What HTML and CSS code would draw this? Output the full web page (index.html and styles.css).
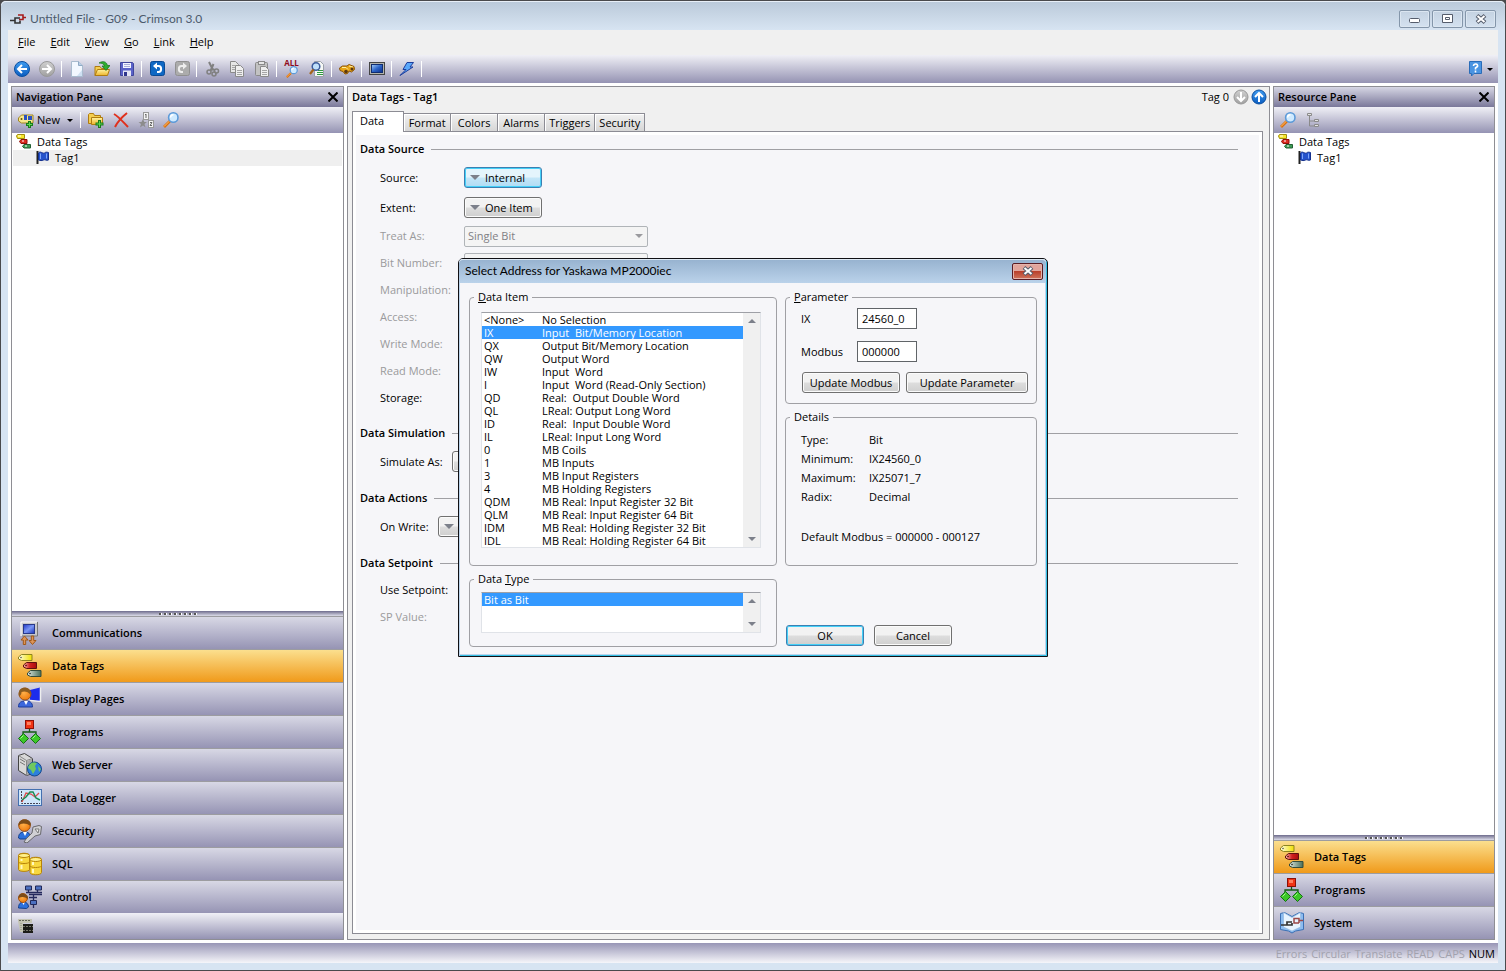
FILE: index.html
```html
<!DOCTYPE html>
<html lang="en">
<head>
  <meta charset="UTF-8" />
  <meta name="viewport" content="width=device-width, initial-scale=1.0"/>
  <title>Untitled File - G09 - Crimson 3.0</title>
  <link rel="stylesheet" href="styles.css">
</head>
<body>
  <!-- shared icons -->
  <svg class="sprite" aria-hidden="true">
    <defs>
      <linearGradient id="g-blue" x1="0" y1="0" x2="0" y2="1"><stop offset="0" stop-color="#3f9cf0"/><stop offset="1" stop-color="#0a5cc0"/></linearGradient>
      <linearGradient id="g-gray" x1="0" y1="0" x2="0" y2="1"><stop offset="0" stop-color="#d0d0d0"/><stop offset="1" stop-color="#a0a0a0"/></linearGradient>
      <linearGradient id="g-gold" x1="0" y1="0" x2="0" y2="1"><stop offset="0" stop-color="#fff3a0"/><stop offset="1" stop-color="#eeb52c"/></linearGradient>
      <linearGradient id="g-yellow" x1="0" y1="0" x2="1" y2="0"><stop offset="0" stop-color="#fffde0"/><stop offset="1" stop-color="#f0e000"/></linearGradient>
      <linearGradient id="g-red" x1="0" y1="0" x2="1" y2="0"><stop offset="0" stop-color="#f8b0a8"/><stop offset=".5" stop-color="#d02020"/><stop offset="1" stop-color="#a80c0c"/></linearGradient>
      <linearGradient id="g-green" x1="0" y1="0" x2="1" y2="0"><stop offset="0" stop-color="#d8e4dc"/><stop offset="1" stop-color="#4a6e58"/></linearGradient>
      <linearGradient id="g-screen" x1="0" y1="0" x2="1" y2="1"><stop offset="0" stop-color="#2038c8"/><stop offset=".5" stop-color="#7a96f4"/><stop offset="1" stop-color="#1830b8"/></linearGradient>
      <linearGradient id="g-panel" x1="0" y1="0" x2="1" y2="1"><stop offset="0" stop-color="#a8d0fa"/><stop offset=".5" stop-color="#2c64c8"/><stop offset="1" stop-color="#0c2c88"/></linearGradient>
      <radialGradient id="g-face" cx=".4" cy=".4" r=".6"><stop offset="0" stop-color="#ffb04a"/><stop offset="1" stop-color="#ef7d10"/></radialGradient>
    </defs>
    <symbol id="i-back" viewBox="0 0 16 16"><circle cx="8" cy="8" r="7.500" fill="url(#g-blue)" stroke="#0b4fa0"/><path d="M13 8H4M8 4L4 8l4 4" fill="none" stroke="#fff" stroke-width="2"/></symbol>
    <symbol id="i-forward" viewBox="0 0 16 16"><circle cx="8" cy="8" r="7.500" fill="url(#g-gray)" stroke="#999"/><path d="M3 8h9M8 4l4 4-4 4" fill="none" stroke="#fff" stroke-width="2"/></symbol>
    <symbol id="i-down" viewBox="0 0 16 16"><circle cx="8" cy="8" r="7" fill="url(#g-gray)" stroke="#999"/><path d="M8 3v9M4 8l4 4 4-4" fill="none" stroke="#fff" stroke-width="2"/></symbol>
    <symbol id="i-up" viewBox="0 0 16 16"><circle cx="8" cy="8" r="7" fill="url(#g-blue)" stroke="#0b4fa0"/><path d="M8 13V4M4 8l4-4 4 4" fill="none" stroke="#fff" stroke-width="2"/></symbol>
    <symbol id="i-new" viewBox="0 0 16 16"><path d="M2.500.5h7l4 4v11h-11z" fill="#f2f8ff" stroke="#a9bccf"/><path d="M9.500.5v4h4" fill="#b9cfe6" stroke="#8fa9c4"/><path d="M8 15l5-6v6z" fill="#cfe0f2"/></symbol>
    <symbol id="i-open" viewBox="0 0 16 16"><path d="M1 14.500V5.500h5l1.500 2H13v2" fill="#f4ce50" stroke="#b07c10"/><path d="M3.500 8.500h12l-2 6H1z" fill="url(#g-gold)" stroke="#b07c10"/><path d="M5 2c4-2.500 7.500-1.500 8.500 2.500H16L12 9.500 8 5h2.500C10 3 8 2 5 2z" fill="#2fae2f" stroke="#14701a" stroke-width=".7"/></symbol>
    <symbol id="i-save" viewBox="0 0 16 16"><path d="M1.500 1.500h12l1 1v12h-13z" fill="#5a62c8" stroke="#40469c"/><path d="M4 2h8v5H4z" fill="#f2f4ff"/><path d="M5 3.500h6M5 5.500h6" stroke="#a8acd8"/><path d="M4 9.500h8V15H4z" fill="#e4e6f4"/><path d="M5 11h3v4H5z" fill="#30368c"/></symbol>
    <symbol id="i-undo" viewBox="0 0 16 16"><rect x="1.500" y=".5" width="14" height="14" rx="2" fill="#0f68c4" stroke="#0a4a94"/><path d="M5 5h4.500c3.500 0 3.500 6 0 6H8" fill="none" stroke="#fff" stroke-width="2"/><path d="M8 1.500v7L4 5z" fill="#fff"/></symbol>
    <symbol id="i-redo" viewBox="0 0 16 16"><rect x="1.500" y=".5" width="14" height="14" rx="2" fill="#acacac" stroke="#909090"/><path d="M12 5H7.500c-3.500 0-3.500 6 0 6H9" fill="none" stroke="#eee" stroke-width="2"/><path d="M9 1.500v7L13 5z" fill="#eee"/></symbol>
    <symbol id="i-cut" viewBox="0 0 16 16"><path d="M5 1l4 8M9.500 3L6.500 10" stroke="#808080" stroke-width="2" fill="none"/><g fill="none" stroke="#808080" stroke-width="1.500"><circle cx="5" cy="11" r="2"/><circle cx="10" cy="13" r="2"/><circle cx="12.500" cy="10" r="2"/></g><path d="M7 8l4 1" stroke="#808080" stroke-width="2"/></symbol>
    <symbol id="i-copy" viewBox="0 0 16 16"><path d="M1.500.5h5l3 3v8h-8z" fill="#e6e6e6" stroke="#8a8a8a"/><path d="M6.500 4.500h5l3 3v8h-8z" fill="#efefef" stroke="#8a8a8a"/><path d="M8 9.500h5M8 11.500h5M8 13.500h5M3 4.500h3M3 6.500h3M3 8.500h3" stroke="#a5a5a5"/></symbol>
    <symbol id="i-paste" viewBox="0 0 16 16"><rect x="1.500" y="1.500" width="12" height="13" rx="1" fill="#c2c2c2" stroke="#8a8a8a"/><rect x="4.500" y=".5" width="6" height="3" fill="#e6e6e6" stroke="#8a8a8a"/><path d="M6.500 5.500h5l3 3v7h-8z" fill="#efefef" stroke="#8a8a8a"/><path d="M8 9.500h5M8 11.500h5M8 13.500h5" stroke="#a5a5a5"/></symbol>
    <symbol id="i-lens" viewBox="0 0 16 16"><path d="M7 9l-6 6" stroke="#dc700c" stroke-width="2.800"/><path d="M6.500 9l-5.500 5.500" stroke="#fcc070" stroke-width="1"/><circle cx="10.300" cy="5.500" r="4.700" fill="#cfeaff" stroke="#5c9ad8" stroke-width="1.600"/><path d="M7.500 5.500a3 3 0 0 1 3-2.700" stroke="#fff" stroke-width="1.500" fill="none"/></symbol>
    <symbol id="i-lens-doc" viewBox="0 0 16 16"><path d="M5.500.5h6l3 3v12h-9z" fill="#f6f8f6" stroke="#9aa0a8"/><path d="M9 9.500h5M8 11.500h6M8 13.500h6" stroke="#2c9a3c"/><circle cx="7" cy="5.500" r="3.800" fill="#c0e0fa" stroke="#3c5c9c" stroke-width="1.500"/><path d="M4.500 8.500L1 13" stroke="#a4641c" stroke-width="2.200"/></symbol>
    <symbol id="i-binoc" viewBox="0 0 16 16"><path d="M.5 7l3-2H8l2-1.500 5 2 .5 3-3 2.500-2.500-1-1.500 2.500-2.500.5-2-2.500-3-1z" fill="#e8a414" stroke="#8c5408"/><path d="M3 6.500h4l2 2M10 5l4 1" stroke="#fff0a0" fill="none"/><circle cx="7" cy="10.500" r="1.800" fill="#5c3810"/><circle cx="13" cy="8" r="1.500" fill="#5c3810"/></symbol>
    <symbol id="i-monitor" viewBox="0 0 16 16"><rect x=".5" y="1.500" width="15" height="12" fill="#b4b4ac" stroke="#444"/><rect x="2.500" y="3.500" width="11" height="8" fill="url(#g-panel)" stroke="#102c70"/></symbol>
    <symbol id="i-bolt" viewBox="0 0 16 16"><path d="M8 1.500h6.500L11 6h3L1 14.500 7 8.500H4z" fill="#5aa8fa" stroke="#1c3c9c"/></symbol>
    <symbol id="i-help" viewBox="0 0 16 16"><path d="M1.500.5h12v12H6L3.500 15v-2.500h-2z" fill="#4a94e2" stroke="#2a6cb8"/><path d="M5.500 5c0-3 5-2.500 4 .5L7.500 7v1.500M7.500 9.500v2" fill="none" stroke="#fff" stroke-width="1.600"/></symbol>
    <symbol id="i-newtag" viewBox="0 0 16 16"><path d="M.5 6l3-3h11.500v8H3.500l-3-2z" fill="#f8e88c" stroke="#a08420"/><circle cx="3.500" cy="7" r="1" fill="#604c10"/><path d="M6 3h3v5H6zM10 4h4v4h-4z" fill="#2c50c0"/><path d="M11.500 9v7M8 12.500h7" stroke="#1a7c1a" stroke-width="3"/><path d="M11.500 10v5M9 12.500h5" stroke="#5cd850"/></symbol>
    <symbol id="i-newfolder" viewBox="0 0 16 16"><path d="M.5 11.500v-9l1-1h4l1 2h6v8z" fill="#f4ce50" stroke="#b07c10"/><path d="M3.500 5.500h11v7h-11z" fill="url(#g-gold)" stroke="#b07c10"/><path d="M11.500 8v8M7.500 12h8" stroke="#1a7c1a" stroke-width="3"/><path d="M11.500 9v6M8.500 12h6" stroke="#5cd850"/></symbol>
    <symbol id="i-delete" viewBox="0 0 16 16"><path d="M1 2c5 3 9 8 14 13M14 1C9 5 5 9 2 15" fill="none" stroke="#e0301c" stroke-width="2"/></symbol>
    <symbol id="i-sort" viewBox="0 0 16 16"><rect x="5.500" y=".5" width="5" height="7" fill="#f4f4f4" stroke="#999"/><path d="M7 3l1-1v4" fill="none" stroke="#666"/><path d="M5 7l1.300 3H9l-2.500 2 1 3.500L5 13.500l-3 2 1-3.500-2.500-2h3z" fill="#8c8c8c"/><rect x="10.500" y="8.500" width="5" height="7" fill="#f4f4f4" stroke="#999"/><path d="M12 10.500h2l-2 3h2" fill="none" stroke="#666"/></symbol>
    <symbol id="i-tree" viewBox="0 0 16 16"><path d="M4.500 4v10H10M4.500 9H10" fill="none" stroke="#8a8a8a"/><path d="M2.500 1.500h4v2h-4zM9.500 7.500h4v2h-4zM9.500 12.500h4v2h-4z" fill="#e4e4e4" stroke="#8a8a8a"/></symbol>
    <symbol id="i-tags" viewBox="0 0 24 24"><path d="M.5 3l3-2.500h10.500v6H3.500L.5 5z" fill="url(#g-yellow)" stroke="#8c8420"/><circle cx="3" cy="3.500" r=".8" fill="#555"/><path d="M5.500 11l3-2.500h10v6h-10l-3-1.500z" fill="url(#g-red)" stroke="#601010"/><circle cx="8" cy="11.500" r=".8" fill="#400"/><path d="M9.500 19l3-2.500h10.500v6H12.500l-3-1.500z" fill="url(#g-green)" stroke="#344c3c"/><circle cx="12" cy="19.500" r=".8" fill="#222"/></symbol>
    <symbol id="i-tags-sm" viewBox="0 0 16 16"><path d="M.5 2l1-1.500h7v4h-7z" fill="#f8e82c" stroke="#a08c10"/><path d="M3.500 7.500l1.500-2h6v4H5z" fill="#dc2c20" stroke="#901008"/><path d="M6.500 12.500l1.500-2h6.500v3.500H8z" fill="#3c9c54" stroke="#246034"/><path d="M2 2h3M6 7h2M9 12h2" stroke="#fff"/></symbol>
    <symbol id="i-flag" viewBox="0 0 16 16"><path d="M2.500 1v13" stroke="#222" stroke-width="2"/><path d="M3.500 3c2-2.500 4 1 6 0 1-1 2-1 4-.500v7.500c-3 1-3-1-5 0s-3 .5-5 0z" fill="#2452cc" stroke="#14308c"/><path d="M5.500 3.500v5.500M11.500 3.500v5" stroke="#7ca4f8"/></symbol>
    <symbol id="i-comm" viewBox="0 0 24 24"><path d="M3 1h17v14H3z" fill="#c8c8cc"/><path d="M3 15V1h16" fill="none" stroke="#fff"/><path d="M19.500 1v14H4" fill="none" stroke="#777"/><rect x="5.500" y="3.500" width="11" height="9" fill="url(#g-screen)" stroke="#283888"/><path d="M6.500 15l3.500 4H7.700v4.500H5.300V19H3zM14.500 23.500l-3.500-4h2.300V15h2.400v4.500H18z" fill="#dc9458" stroke="#a05818"/></symbol>
    <symbol id="i-display" viewBox="0 0 24 24"><path d="M12 3L22 .5v14L12 13z" fill="#1c2cec"/><path d="M22.500.5v14L12 13.500" fill="none" stroke="#eee" stroke-width="1.500"/><path d="M.5 20c0-5 3-6 7-6s7 1 7 6z" fill="#3c68dc" stroke="#1c3c9c"/><path d="M6 14l2 4 2-4z" fill="#fff"/><circle cx="7" cy="7" r="6" fill="url(#g-face)" stroke="#a05010"/><path d="M1 9C-.5 1 5.500 0 8.500 1s5 3 4 7c-2-4-7-4-9-3 0 2-1 4-2.500 4z" fill="#8c5c20"/></symbol>
    <symbol id="i-programs" viewBox="0 0 24 24"><path d="M11.500 8v4M5 16v-4h13v4" fill="none" stroke="#145c14" stroke-width="1.300"/><rect x="7.500" y=".5" width="8" height="8" fill="#f03414" stroke="#8c1008"/><path d="M9 2h4v3H9z" fill="#ff8060"/><path d="M5.500 13.500l5 5-5 5-5-5zM17.500 13.500l5 5-5 5-5-5z" fill="#3cc828" stroke="#147014"/><path d="M2.500 18.500l3-3M14.500 18.500l3-3" stroke="#a4f490"/></symbol>
    <symbol id="i-web" viewBox="0 0 24 24"><path d="M.5 2.500l6-2 8 5v15l-6 2-8-5z" fill="#d8d8d8" stroke="#444"/><path d="M.5 2.500l8 5v15M8.500 7.500l6-2" stroke="#888" fill="none"/><path d="M9 8l5-2v14l-5 2z" fill="#a8a8a8"/><path d="M2 6l5 3M2 9l5 3" stroke="#777"/><circle cx="16.500" cy="16" r="7" fill="#2c80dc" stroke="#14488c"/><path d="M11 12c2-3 6-3 8-2l-2 3 1 3-3 5-2-4-3-2zM20 13l3 3-2 3z" fill="#70c860"/></symbol>
    <symbol id="i-logger" viewBox="0 0 24 24"><rect x=".5" y="3.500" width="23" height="16" fill="#cfe6fa" stroke="#4470b0"/><path d="M3.500 5v12.500H22" fill="none" stroke="#445" stroke-dasharray="2 1"/><path d="M4 16l4-9 5 1 4 3 4-4" fill="none" stroke="#e04c4c" stroke-width="1.300"/><path d="M4 14l4-3 4-5h3l3 6 4 2" fill="none" stroke="#1c8c54" stroke-width="1.500"/></symbol>
    <symbol id="i-security" viewBox="0 0 24 24"><path d="M.5 19c0-4 2-6 6-6s6 2 6 5l-3 2H2z" fill="#2c70dc" stroke="#14408c"/><path d="M5 13l2 4 2-4z" fill="#fff"/><circle cx="6.500" cy="6.500" r="5.800" fill="url(#g-face)" stroke="#a05010"/><path d="M.5 7C0 1 5 0 8 .5s6 3 4.500 6.500c-3-3-8-3-10-2z" fill="#7c4c18"/><path d="M15 8l6-1.500 2.500 1-1 8-5.500 1.500-8 7-3-1 2-3 6-6z" fill="#d0d0d4" stroke="#68686c"/><path d="M17 10h4l-1 4z" fill="#f4f4f4" stroke="#777"/></symbol>
    <symbol id="i-sql" viewBox="0 0 24 24"><g fill="#f8d840" stroke="#b88408"><path d="M.5 3.500c0-3 11-3 11 0v14c0 2.500-11 2.500-11 0z"/><path d="M.5 10c1 2 10 2 11 0" fill="none"/><ellipse cx="6" cy="3.500" rx="5.500" ry="2" fill="#fff088"/><path d="M12 7.500c0-3 11.500-3 11.500 0v13c0 3-11.500 3-11.500 0z"/><path d="M12 14c1 2 10 2 11.500 0" fill="none"/><ellipse cx="17.700" cy="7.500" rx="5.700" ry="2" fill="#fff088"/></g><path d="M3.500 7v2M3.500 13v4M15 10v3M15 17v4" stroke="#fff8c0" stroke-width="2"/></symbol>
    <symbol id="i-control" viewBox="0 0 24 24"><path d="M10.500 5v2.500M19.500 5v2.500M8 7.500h16M11 9.500h13M15.500 10v5M11 12.500h8M15.500 19v4" stroke="#24285c" stroke-width="1.300"/><path d="M7.500 1h6v4h-6zM17.500 1h6v4h-6zM12.500 15.500h6v4h-6z" fill="#4c70c0" stroke="#202858"/><path d="M.5 23c0-4 2-6 5-6s5 2 5 5l-2 1.500z" fill="#2c70dc" stroke="#14408c"/><path d="M4 17l1.500 3L7 17z" fill="#fff"/><circle cx="5" cy="13" r="4.500" fill="url(#g-face)" stroke="#a05010"/><path d="M.5 13c0-5 4-5 6-4s4 2 3 5c-2-2-5-3-9-1z" fill="#7c4c18"/></symbol>
    <symbol id="i-system" viewBox="0 0 24 24"><path d="M.5 2.500l4-1 7.500 4 7.500-4 4 1v16l-8 1.500-3.500 2-3.500-2-8-1.500z" fill="#8cbcf0" stroke="#3c70b4"/><path d="M3.500 1.500l8.500 5 8.500-5V16l-8.500 4-8.500-4z" fill="#e8f4ff" stroke="#90b4dc" stroke-width=".6"/><path d="M1 14h6v-3h5M7 14h5v-2" fill="none" stroke="#333" stroke-width="1.700"/><path d="M23 9.500h-4M19 12h-5V7.500h5v4.500" fill="none" stroke="#9c4848" stroke-width="1.500"/></symbol>
    <symbol id="i-calc" viewBox="0 0 16 16"><path d="M0 1h14v4H5v9H2L0 3z" fill="#c4c4b4"/><path d="M1 2.500h12" stroke="#666858" stroke-dasharray="2 1"/><path d="M3 5v8" stroke="#8c8e7c" stroke-dasharray="1 1"/><rect x="5" y="6" width="10" height="9" fill="#1c1c18"/><path d="M5 8.500h10M5 12.500h10" stroke="#77776a" stroke-dasharray="2 1"/></symbol>
    <symbol id="i-app" viewBox="0 0 16 16"><path d="M0 9.500h5M10 7H5v5h5V9.500" fill="none" stroke="#333" stroke-width="1.600"/><path d="M16 6.500h-3M8 4h5v4.500H9" fill="none" stroke="#a81c1c" stroke-width="1.600"/></symbol>
    <symbol id="i-x" viewBox="0 0 10 10"><path d="M.5.5l9 9M9.500.5l-9 9" stroke="#000" stroke-width="2"/></symbol>
    <symbol id="i-winx" viewBox="0 0 12 10"><path d="M2 1.500l8 7M10 1.500l-8 7" stroke="#555d6c" stroke-width="4"/><path d="M2.500 2l7 6M9.500 2l-7 6" stroke="#fff" stroke-width="2"/></symbol>
  </svg>

  <div class="window">
    <header class="title-bar">
      <svg class="icon16"><use href="#i-app"/></svg>
      <h1>Untitled File - G09 - Crimson 3.0</h1>
      <div class="win-buttons">
        <button type="button" aria-label="Minimize"><svg width="12" height="10"><rect x=".5" y="4.500" width="10" height="4" rx="1" fill="#fff" stroke="#555d6c"/></svg></button>
        <button type="button" aria-label="Restore"><svg width="12" height="10"><path d="M.5.5h10v8H.5zM3.500 3.500h4v2h-4z" fill="#fff" stroke="#555d6c"/></svg></button>
        <button type="button" aria-label="Close"><svg width="12" height="10"><use href="#i-winx"/></svg></button>
      </div>
    </header>

    <div class="client">
      <nav class="menu-bar">
        <a href="#"><u>F</u>ile</a>
        <a href="#"><u>E</u>dit</a>
        <a href="#"><u>V</u>iew</a>
        <a href="#"><u>G</u>o</a>
        <a href="#"><u>L</u>ink</a>
        <a href="#"><u>H</u>elp</a>
      </nav>

      <div class="toolbar">
        <button type="button" aria-label="Back"><svg class="icon16"><use href="#i-back"/></svg></button>
        <button type="button" aria-label="Forward"><svg class="icon16"><use href="#i-forward"/></svg></button>
        <span class="sep"></span>
        <button type="button" aria-label="New"><svg class="icon16"><use href="#i-new"/></svg></button>
        <button type="button" aria-label="Open"><svg class="icon16"><use href="#i-open"/></svg></button>
        <button type="button" aria-label="Save"><svg class="icon16"><use href="#i-save"/></svg></button>
        <span class="sep"></span>
        <button type="button" aria-label="Undo"><svg class="icon16"><use href="#i-undo"/></svg></button>
        <button type="button" aria-label="Redo"><svg class="icon16"><use href="#i-redo"/></svg></button>
        <span class="sep"></span>
        <button type="button" aria-label="Cut"><svg class="icon16"><use href="#i-cut"/></svg></button>
        <button type="button" aria-label="Copy"><svg class="icon16"><use href="#i-copy"/></svg></button>
        <button type="button" aria-label="Paste"><svg class="icon16"><use href="#i-paste"/></svg></button>
        <span class="sep"></span>
        <button type="button" class="find-all" aria-label="Find all"><span>ALL</span><svg width="12" height="12"><use href="#i-lens"/></svg></button>
        <button type="button" aria-label="Find in file"><svg class="icon16"><use href="#i-lens-doc"/></svg></button>
        <span class="sep"></span>
        <button type="button" aria-label="Browse"><svg class="icon16"><use href="#i-binoc"/></svg></button>
        <span class="sep"></span>
        <button type="button" aria-label="Emulator"><svg class="icon16"><use href="#i-monitor"/></svg></button>
        <span class="sep"></span>
        <button type="button" aria-label="Download"><svg class="icon16"><use href="#i-bolt"/></svg></button>
        <span class="sep"></span>
        <button type="button" class="help-btn" aria-label="Help"><svg class="icon16"><use href="#i-help"/></svg><i class="caret"></i></button>
      </div>

      <main class="workspace">
        <aside class="pane">
          <div class="pane-header"><h2>Navigation Pane</h2><button type="button" aria-label="Close pane"><svg width="10" height="10"><use href="#i-x"/></svg></button></div>
          <div class="toolbar pane-toolbar">
            <button type="button" class="new-btn"><svg class="icon16"><use href="#i-newtag"/></svg>New<i class="caret"></i></button>
            <span class="sep"></span>
            <button type="button" aria-label="New folder"><svg class="icon16"><use href="#i-newfolder"/></svg></button>
            <button type="button" aria-label="Delete"><svg class="icon16"><use href="#i-delete"/></svg></button>
            <button type="button" aria-label="Sort"><svg class="icon16"><use href="#i-sort"/></svg></button>
            <button type="button" aria-label="Find"><svg class="icon16"><use href="#i-lens"/></svg></button>
          </div>
          <ul class="tree">
            <li><svg class="icon16"><use href="#i-tags-sm"/></svg>Data Tags</li>
            <li class="child selected"><svg class="icon16"><use href="#i-flag"/></svg>Tag1</li>
          </ul>
          <div class="splitter"></div>
          <nav class="categories">
            <a href="#"><svg class="icon24"><use href="#i-comm"/></svg>Communications</a>
            <a href="#" class="active"><svg class="icon24"><use href="#i-tags"/></svg>Data Tags</a>
            <a href="#"><svg class="icon24"><use href="#i-display"/></svg>Display Pages</a>
            <a href="#"><svg class="icon24"><use href="#i-programs"/></svg>Programs</a>
            <a href="#"><svg class="icon24"><use href="#i-web"/></svg>Web Server</a>
            <a href="#"><svg class="icon24"><use href="#i-logger"/></svg>Data Logger</a>
            <a href="#"><svg class="icon24"><use href="#i-security"/></svg>Security</a>
            <a href="#"><svg class="icon24"><use href="#i-sql"/></svg>SQL</a>
            <a href="#"><svg class="icon24"><use href="#i-control"/></svg>Control</a>
          </nav>
          <div class="toolbar pane-toolbar pane-footer">
            <button type="button" aria-label="Devices"><svg class="icon16"><use href="#i-calc"/></svg></button>
          </div>
        </aside>

        <section class="editor">
          <div class="editor-header">
            <h2>Data Tags - Tag1</h2>
            <span class="tag-index">Tag 0</span>
            <button type="button" aria-label="Next tag"><svg class="icon16"><use href="#i-down"/></svg></button>
            <button type="button" aria-label="Previous tag"><svg class="icon16"><use href="#i-up"/></svg></button>
          </div>
          <div class="tabs" role="tablist">
            <button type="button" role="tab" class="active">Data</button>
            <button type="button" role="tab">Format</button>
            <button type="button" role="tab">Colors</button>
            <button type="button" role="tab">Alarms</button>
            <button type="button" role="tab">Triggers</button>
            <button type="button" role="tab">Security</button>
          </div>
          <form class="sheet">
            <h3>Data Source</h3>
            <div class="row tall"><label for="source">Source:</label><button type="button" id="source" class="btn drop default"><i class="arrow"></i>Internal</button></div>
            <div class="row tall"><label for="extent">Extent:</label><button type="button" id="extent" class="btn drop"><i class="arrow"></i>One Item</button></div>
            <div class="row off"><label for="treat">Treat As:</label><span class="combo"><select id="treat" disabled><option>Single Bit</option></select><i class="arrow"></i></span></div>
            <div class="row off"><label for="bit">Bit Number:</label><span class="combo"><select id="bit" disabled></select></span></div>
            <div class="row off"><span>Manipulation:</span></div>
            <div class="row off"><span>Access:</span></div>
            <div class="row off"><span>Write Mode:</span></div>
            <div class="row off"><span>Read Mode:</span></div>
            <div class="row"><span>Storage:</span></div>
            <h3>Data Simulation</h3>
            <div class="row tall fit"><label for="simulate">Simulate As:</label><button type="button" id="simulate" class="btn drop"><i class="arrow"></i></button></div>
            <h3>Data Actions</h3>
            <div class="row tall fit"><label for="write">On Write:</label><button type="button" id="write" class="btn drop"><i class="arrow"></i></button></div>
            <h3>Data Setpoint</h3>
            <div class="row"><span>Use Setpoint:</span></div>
            <div class="row off"><span>SP Value:</span></div>
          </form>
        </section>

        <aside class="pane pane-right">
          <div class="pane-header"><h2>Resource Pane</h2><button type="button" aria-label="Close pane"><svg width="10" height="10"><use href="#i-x"/></svg></button></div>
          <div class="toolbar pane-toolbar">
            <button type="button" aria-label="Find"><svg class="icon16"><use href="#i-lens"/></svg></button>
            <button type="button" aria-label="Tree"><svg class="icon16"><use href="#i-tree"/></svg></button>
          </div>
          <ul class="tree">
            <li><svg class="icon16"><use href="#i-tags-sm"/></svg>Data Tags</li>
            <li class="child"><svg class="icon16"><use href="#i-flag"/></svg>Tag1</li>
          </ul>
          <div class="splitter"></div>
          <nav class="categories">
            <a href="#" class="active"><svg class="icon24"><use href="#i-tags"/></svg>Data Tags</a>
            <a href="#"><svg class="icon24"><use href="#i-programs"/></svg>Programs</a>
            <a href="#"><svg class="icon24"><use href="#i-system"/></svg>System</a>
          </nav>
        </aside>
      </main>

      <footer class="status-bar">
        <span>Errors</span><span>Circular</span><span>Translate</span><span>READ</span><span>CAPS</span><span class="on">NUM</span>
      </footer>
    </div>
  </div>

  <div class="overlay">
    <div class="dialog" role="dialog" aria-labelledby="dialog-title">
      <div class="dialog-title">
        <h2 id="dialog-title">Select Address for Yaskawa MP2000iec</h2>
        <button type="button" aria-label="Close"><svg width="12" height="10"><use href="#i-winx"/></svg></button>
      </div>
      <div class="dialog-body">
        <fieldset class="list-group">
          <legend><u>D</u>ata Item</legend>
          <div class="list-box">
            <ul role="listbox" aria-label="Data Item" tabindex="0">
              <li role="option"><b>&lt;None&gt;</b>No Selection</li>
              <li role="option" aria-selected="true" class="selected"><b>IX</b>Input  Bit/Memory Location</li>
              <li role="option"><b>QX</b>Output Bit/Memory Location</li>
              <li role="option"><b>QW</b>Output Word</li>
              <li role="option"><b>IW</b>Input  Word</li>
              <li role="option"><b>I</b>Input  Word (Read-Only Section)</li>
              <li role="option"><b>QD</b>Real:  Output Double Word</li>
              <li role="option"><b>QL</b>LReal: Output Long Word</li>
              <li role="option"><b>ID</b>Real:  Input Double Word</li>
              <li role="option"><b>IL</b>LReal: Input Long Word</li>
              <li role="option"><b>0</b>MB Coils</li>
              <li role="option"><b>1</b>MB Inputs</li>
              <li role="option"><b>3</b>MB Input Registers</li>
              <li role="option"><b>4</b>MB Holding Registers</li>
              <li role="option"><b>QDM</b>MB Real: Input Register 32 Bit</li>
              <li role="option"><b>QLM</b>MB Real: Input Register 64 Bit</li>
              <li role="option"><b>IDM</b>MB Real: Holding Register 32 Bit</li>
              <li role="option"><b>IDL</b>MB Real: Holding Register 64 Bit</li>
            </ul>
            <div class="scrollbar"><i class="arrow up"></i><i class="arrow"></i></div>
          </div>
        </fieldset>

        <div class="side">
          <fieldset class="parameter">
            <legend><u>P</u>arameter</legend>
            <div class="fields">
              <label for="ix">IX</label><input type="text" id="ix" value="24560_0">
              <label for="modbus">Modbus</label><input type="text" id="modbus" value="000000">
            </div>
            <div class="actions">
              <button type="button" class="btn">Update Modbus</button>
              <button type="button" class="btn">Update Parameter</button>
            </div>
          </fieldset>
          <fieldset class="details">
            <legend>Details</legend>
            <dl>
              <dt>Type:</dt><dd>Bit</dd>
              <dt>Minimum:</dt><dd>IX24560_0</dd>
              <dt>Maximum:</dt><dd>IX25071_7</dd>
              <dt>Radix:</dt><dd>Decimal</dd>
            </dl>
            <p>Default Modbus = 000000 - 000127</p>
          </fieldset>
        </div>

        <fieldset class="list-group type-group">
          <legend>Data <u>T</u>ype</legend>
          <div class="list-box">
            <ul role="listbox" aria-label="Data Type" tabindex="0">
              <li role="option" aria-selected="true" class="selected">Bit as Bit</li>
            </ul>
            <div class="scrollbar"><i class="arrow up"></i><i class="arrow"></i></div>
          </div>
        </fieldset>

        <div class="dialog-buttons">
          <button type="button" class="btn default">OK</button>
          <button type="button" class="btn">Cancel</button>
        </div>
      </div>
    </div>
  </div>
</body>
</html>
```
FILE: styles.css
```css
* {
  box-sizing: border-box;
}

body {
  margin: 0;
  background: #4a4a4c;
  font-family: "Open Sans", "Noto Sans", sans-serif;
  font-size: 11px;
  line-height: 16px;
  color: #000;
}

h1, h2, h3, p, ul, dl, dd {
  margin: 0;
  padding: 0;
}

h1, h2, h3 {
  font-size: 11px;
  font-weight: 600;
}

button, input, select {
  font: inherit;
  color: inherit;
}

button {
  margin: 0;
  padding: 0;
  border: 0;
  background: none;
}

a {
  color: inherit;
  text-decoration: none;
}

svg {
  display: block;
  flex: none;
}

.sprite {
  position: absolute;
  width: 0;
  height: 0;
}

.icon16 {
  width: 16px;
  height: 16px;
}

.icon24 {
  width: 24px;
  height: 24px;
}

/* main window */
.window {
  min-height: 100vh;
  display: flex;
  flex-direction: column;
  padding: 0 7px 7px;
  border: 1px solid #4a4a4c;
  border-radius: 6px 6px 0 0;
  background: #d7e4f2;
}

.title-bar {
  height: 29px;
  margin: 0 -7px;
  padding: 6px 9px 0;
  display: flex;
  align-items: center;
  gap: 4px;
  border-radius: 5px 5px 0 0;
  background: linear-gradient(#bac9d9, #d7e4f2);
  box-shadow: inset 0 1px #e8eff7;
}

.title-bar h1,
.dialog-title h2 {
  font-family: Lato, "Open Sans", sans-serif;
  font-size: 12px;
  font-weight: 400;
}

.title-bar h1 {
  color: #4c5a6c;
}

.win-buttons {
  display: flex;
  gap: 2px;
  margin-left: auto;
}

.win-buttons button {
  width: 31px;
  height: 18px;
  display: grid;
  place-items: center;
  border: 1px solid #8496aa;
  border-radius: 2px;
  box-shadow: inset 0 0 0 1px #dbe6f1;
}

.client {
  flex: 1;
  display: flex;
  flex-direction: column;
  background: #fff;
}

.menu-bar {
  height: 25px;
  display: flex;
  align-items: center;
  gap: 15px;
  padding: 0 0 2px 10px;
  background: #f0f0f0;
}

.toolbar {
  height: 28px;
  display: flex;
  align-items: center;
  padding-left: 1px;
  background: linear-gradient(#f0f0f6, #9593b3);
}

.toolbar button {
  width: 25px;
  height: 22px;
  display: flex;
  align-items: center;
  justify-content: center;
}

.sep {
  width: 5px;
  height: 16px;
  border-left: 2px solid transparent;
  border-right: 2px solid transparent;
  background: #fff;
  background-clip: padding-box;
}

.toolbar .find-all {
  flex-direction: column;
  font-size: 8px;
  line-height: 6px;
  font-weight: 700;
  color: #900c1c;
}

.toolbar .help-btn {
  width: 31px;
  gap: 3px;
  margin-left: auto;
  margin-right: 2px;
}

.caret {
  border: 3px solid transparent;
  border-top-color: #000;
  border-bottom: 0;
}

/* panes */
.workspace {
  flex: 1;
  display: flex;
  gap: 3px;
  padding: 3px;
}

.pane {
  flex: none;
  width: 333px;
  display: flex;
  flex-direction: column;
  border: 1px solid #8e8e94;
  background: #fff;
}

.pane-right {
  width: 222px;
}

.pane-header {
  height: 20px;
  display: flex;
  align-items: center;
  justify-content: space-between;
  padding: 0 5px 0 4px;
  background: linear-gradient(#d6d6e4, #7a789a);
}

.pane-toolbar {
  height: 26px;
}

.toolbar .new-btn {
  width: 65px;
  gap: 3px;
}

.new-btn .caret {
  margin-left: 4px;
}

.tree {
  flex: 1;
  padding: 1px;
  list-style: none;
}

.tree li {
  height: 16px;
  display: flex;
  align-items: center;
  gap: 5px;
  padding-left: 3px;
}

.tree .child {
  padding-left: 22px;
  gap: 4px;
}

.tree .selected {
  background: #efefef;
}

.splitter {
  height: 5px;
  display: flex;
  justify-content: center;
  align-items: center;
  background: linear-gradient(#6d6b8c, #dcdce8);
}

.splitter::before {
  content: "";
  width: 38px;
  height: 2px;
  background: repeating-linear-gradient(90deg, #555 0 2px, #fff 2px 3px, transparent 3px 5px);
}

.categories a {
  height: 33px;
  display: flex;
  align-items: center;
  gap: 10px;
  padding-left: 6px;
  border-top: 1px solid #9c9ca0;
  background: linear-gradient(#d8d8e5, #9694b4);
  font-weight: 600;
}

.categories .active {
  background: linear-gradient(#fbdf8e, #f09a1a);
}

/* editor */
.editor {
  flex: 1;
  display: flex;
  flex-direction: column;
  padding: 0 6px 5px 4px;
  border: 1px solid #8e8e94;
  background: #f0f0f0;
}

.editor-header {
  height: 24px;
  display: flex;
  align-items: center;
  gap: 2px;
  padding-bottom: 4px;
  margin-right: -4px;
}

.tag-index {
  margin-left: auto;
  margin-right: 2px;
}

.tabs {
  display: flex;
  align-items: flex-end;
  margin-bottom: -1px;
}

.tabs button {
  height: 19px;
  min-width: 47px;
  padding: 0 4px;
  border: 1px solid #8c8c94;
  border-left: 0;
  background: linear-gradient(#f2f2f2, #d6d6d6);
  box-shadow: inset 1px 1px #fff;
}

.tabs .active {
  z-index: 1;
  height: 21px;
  padding: 0 19px 2px 7px;
  border-left: 1px solid #8c8c94;
  border-bottom: 0;
  background: #fff;
}

.sheet {
  flex: 1;
  padding: 4px 24px 0 4px;
  border: 1px solid #8c8c94;
  background: #f6f6f9;
  box-shadow: inset 0 0 0 3px #fff;
}

.sheet h3 {
  height: 20px;
  display: flex;
  align-items: center;
  gap: 7px;
  margin: 11px 0 4px 3px;
}

.sheet h3:first-child {
  margin-top: 3px;
}

.sheet h3::after {
  content: "";
  flex: 1;
  height: 1px;
  background: #a0a0a4;
}

.row {
  height: 27px;
  display: grid;
  grid-template-columns: 84px 184px;
  align-items: center;
  padding-left: 23px;
  padding-bottom: 1px;
}

.row.tall {
  height: 30px;
}

.row.fit {
  grid-template-columns: auto auto;
  justify-content: start;
  gap: 9px;
}

.off {
  color: #9a9a9c;
}

.btn {
  height: 21px;
  width: 78px;
  display: flex;
  align-items: center;
  justify-content: center;
  border: 1px solid #707070;
  border-radius: 3px;
  background: linear-gradient(#f2f2f2 0 48%, #dddddd 52%, #cfcfcf);
  box-shadow: inset 0 0 0 1px #fbfbfb;
}

.btn.drop {
  justify-content: flex-start;
  gap: 5px;
  padding-left: 5px;
}

.btn.default {
  border-color: #3c7fb1;
  box-shadow: inset 0 0 0 1px #44d0f8;
}

.drop.default {
  background: linear-gradient(#e4f4fc 0 48%, #c4e6f8 52%, #b0dcf4);
}

.arrow {
  border: 5px solid transparent;
  border-top-color: #7c808a;
  border-bottom: 0;
}

.combo {
  display: flex;
  align-items: center;
  height: 21px;
  border: 1px solid #b0b4b8;
  border-radius: 2px;
  background: #f4f4f4;
}

.combo select {
  flex: 1;
  height: 19px;
  padding: 0 3px;
  border: 0;
  background: none;
  appearance: none;
  color: #808084;
  opacity: 1;
}

.combo .arrow {
  margin-right: 4px;
  border-width: 4px 4px 0;
  border-top-color: #9a9a9e;
}

.status-bar {
  height: 20px;
  display: flex;
  align-items: center;
  justify-content: flex-end;
  gap: 4px;
  padding: 2px 3px 0;
  background: linear-gradient(#9896b6, #f6f6fa);
  color: #a2a2ae;
}

.status-bar .on {
  color: #000;
}

/* address dialog */
.overlay {
  position: absolute;
  inset: 0;
  display: flex;
  justify-content: center;
  align-items: flex-start;
  padding-top: 258px;
}

.dialog {
  width: 590px;
  border: 1px solid #101014;
  border-radius: 5px 5px 0 0;
  background: #f6f6f9;
  box-shadow: inset 1px 0 #bcd4ec, inset -1px -1px #34c0e4, inset -2px -2px #bcd4ec;
}

.dialog-title {
  height: 24px;
  display: flex;
  align-items: center;
  justify-content: space-between;
  padding: 0 3px 0 6px;
  margin-right: 1px;
  border-radius: 4px 4px 0 0;
  background: linear-gradient(#96b2cf, #bad2ea);
  box-shadow: inset 0 1px #dfeaf5;
}

.dialog-title button {
  width: 31px;
  height: 17px;
  display: grid;
  place-items: center;
  border: 1px solid #5a1c24;
  border-radius: 2px;
  background: linear-gradient(#e2a59c 0 45%, #b9402c 50%, #d0745c);
  box-shadow: inset 0 0 0 1px #e4b4ac;
}

.dialog-body {
  display: grid;
  grid-template-columns: 308px 1fr;
  gap: 5px 8px;
  padding: 6px 10px 9px;
}

fieldset {
  margin: 0;
  padding: 0 4px;
  min-width: 0;
  border: 1px solid #a0a0a4;
  border-radius: 4px;
}

legend {
  padding: 0 4px;
}

.list-group {
  padding: 7px 11px 17px 4px;
}

.type-group {
  padding-top: 5px;
  padding-bottom: 13px;
}

.list-box {
  display: flex;
  margin-left: 7px;
  margin-right: 4px;
  border: 1px solid #e0e3e8;
  border-top-color: #9ea0a6;
  background: #fff;
}

.list-box ul {
  flex: 1;
  list-style: none;
  outline: none;
}

.type-group ul {
  min-height: 39px;
}

.list-box li {
  display: flex;
  height: 13px;
  line-height: 13px;
  padding-left: 2px;
  white-space: pre;
}

.list-box b {
  width: 58px;
  font-weight: 400;
}

.list-box .selected {
  background: #3399ff;
  color: #fff;
}

.scrollbar {
  width: 17px;
  display: flex;
  flex-direction: column;
  align-items: center;
  justify-content: space-between;
  padding: 6px 0;
  background: #f0f0f0;
}

.scrollbar .arrow {
  border-width: 4px 4px 0;
}

.scrollbar .up {
  transform: rotate(180deg);
}

.side {
  display: flex;
  flex-direction: column;
  gap: 5px;
}

.parameter {
  padding-top: 3px;
  padding-bottom: 10px;
}

.fields {
  display: grid;
  grid-template-columns: 56px 60px;
  align-items: center;
  row-gap: 12px;
  padding-left: 11px;
}

.fields input {
  width: 100%;
  height: 21px;
  padding: 0 4px;
  border: 1px solid #606468;
  background: #fff;
}

.actions {
  display: flex;
  gap: 6px;
  margin-top: 10px;
  padding: 0 4px 0 12px;
}

.actions .btn {
  width: auto;
  flex: 98 1 0;
}

.actions .btn + .btn {
  flex-grow: 122;
}

.details {
  flex: 1;
  padding-top: 5px;
}

.details dl {
  display: grid;
  grid-template-columns: 68px 1fr;
  line-height: 19px;
  padding-left: 11px;
}

.details p {
  margin-top: 23px;
  padding-left: 11px;
}

.dialog-buttons {
  display: flex;
  align-items: flex-end;
  gap: 10px;
  padding-left: 1px;
  padding-bottom: 1px;
}
```
